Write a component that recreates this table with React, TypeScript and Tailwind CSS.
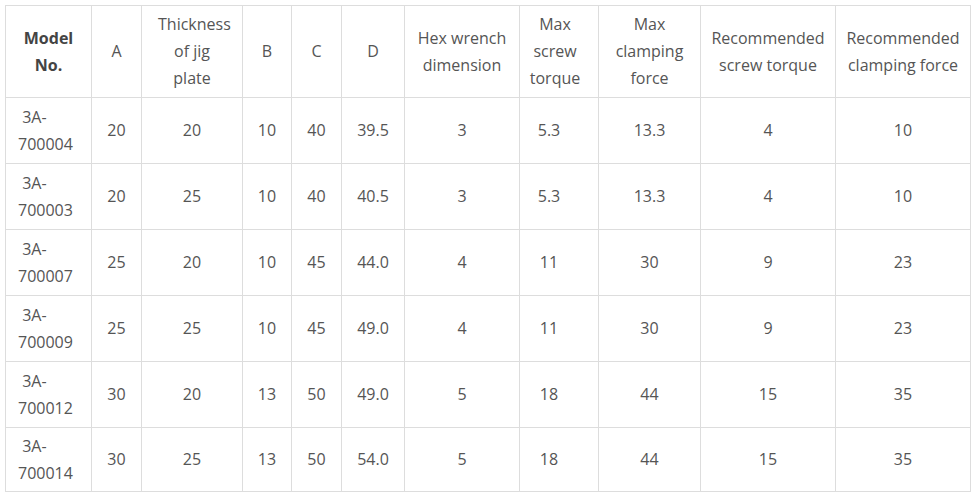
const widths = [86, 50, 101, 49, 50, 63, 115, 79, 102, 135, 135];

const headers = [
  'A',
  'Thickness of jig plate',
  'B',
  'C',
  'D',
  'Hex wrench dimension',
  'Max screw torque',
  'Max clamping force',
  'Recommended screw torque',
  'Recommended clamping force',
];

const rows = [
  ['700004', '20', '20', '10', '40', '39.5', '3', '5.3', '13.3', '4', '10'],
  ['700003', '20', '25', '10', '40', '40.5', '3', '5.3', '13.3', '4', '10'],
  ['700007', '25', '20', '10', '45', '44.0', '4', '11', '30', '9', '23'],
  ['700009', '25', '25', '10', '45', '49.0', '4', '11', '30', '9', '23'],
  ['700012', '30', '20', '13', '50', '49.0', '5', '18', '44', '15', '35'],
  ['700014', '30', '25', '13', '50', '54.0', '5', '18', '44', '15', '35'],
];

export default function App() {
  return (
    <div className="bg-white w-[976px] h-[498px] pt-[5px] pl-[5px] font-['Open_Sans',sans-serif] text-[16px] leading-[27px] text-[#555]">
      <table className="table-fixed border-collapse w-[966px] border border-[#ddd]">
        <colgroup>
          {widths.map((w, i) => (
            <col key={i} style={{ width: w }} />
          ))}
        </colgroup>
        <thead>
          <tr className="h-[92px]">
            <th className="border border-[#ddd] px-2 font-bold text-[#444] align-middle text-center">
              Model
              <br />
              No.
            </th>
            {headers.map((h, i) => (
              <th
                key={i}
                className={
                  i === 1
                    ? 'border border-[#ddd] px-[16px] font-normal align-middle text-center'
                    : i === 6
                      ? 'border border-[#ddd] pl-2 pr-[16px] font-normal align-middle text-center'
                      : 'border border-[#ddd] px-2 font-normal align-middle text-center'
                }
              >
                {h}
              </th>
            ))}
          </tr>
        </thead>
        <tbody>
          {rows.map((r, ri) => (
            <tr key={ri} className={ri === rows.length - 1 ? 'h-[64px]' : 'h-[66px]'}>
              <td className="border border-[#ddd] pl-[12px] align-middle text-left">
                {'\u00a03A-'}
                <br />
                {r[0]}
              </td>
              {r.slice(1).map((c, ci) => (
                <td
                  key={ci}
                  className={
                    ci === 6
                      ? 'border border-[#ddd] pl-2 pr-[28px] align-middle text-center'
                      : 'border border-[#ddd] px-2 align-middle text-center'
                  }
                >
                  {c}
                </td>
              ))}
            </tr>
          ))}
        </tbody>
      </table>
    </div>
  );
}
